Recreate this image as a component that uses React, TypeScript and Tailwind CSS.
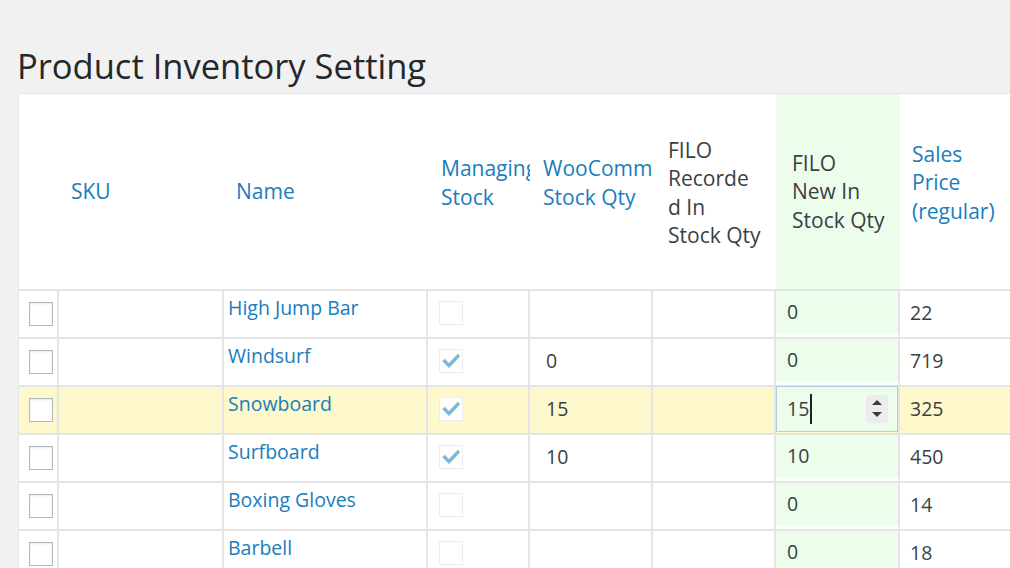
import clsx from 'clsx'

type Row = {
  name: string
  managed: boolean
  woo: string
  filoNew: string
  price: string
  active?: boolean
}

const rows: Row[] = [
  { name: 'High Jump Bar', managed: false, woo: '', filoNew: '0', price: '22' },
  { name: 'Windsurf', managed: true, woo: '0', filoNew: '0', price: '719' },
  { name: 'Snowboard', managed: true, woo: '15', filoNew: '15', price: '325', active: true },
  { name: 'Surfboard', managed: true, woo: '10', filoNew: '10', price: '450' },
  { name: 'Boxing Gloves', managed: false, woo: '', filoNew: '0', price: '14' },
  { name: 'Barbell', managed: false, woo: '', filoNew: '0', price: '18' },
]

const cell = 'border-r-2 border-b-2 border-[#e5e5e5]'
const head = 'flex items-center border-b-2 border-[#e5e5e5] text-[21px] leading-[28.3px]'
const link = 'text-[#1a7dbd]'

function Checkbox({ checked, disabled }: { checked?: boolean; disabled?: boolean }) {
  return (
    <span
      className={clsx(
        'relative block h-6 w-6 border-[1.5px] bg-white',
        disabled ? 'border-[#ececec]' : 'border-[#b4b9be] shadow-[inset_0_1px_2px_rgba(0,0,0,0.1)]',
      )}
    >
      {checked && (
        <svg viewBox="0 0 24 24" className="absolute left-[-1.5px] top-[-1.5px] h-6 w-6" aria-hidden>
          <polyline points="4.5,12 10,17.5 20,7" fill="none" stroke="#7ab8d8" strokeWidth="3.4" />
        </svg>
      )}
    </span>
  )
}

function Spinner() {
  return (
    <span className="ml-auto mr-[9px] block h-[28px] w-[22px] rounded-sm bg-[#ececec]">
      <svg viewBox="0 0 22 28" className="h-[28px] w-[22px]" aria-hidden>
        <path d="M6 10h10l-5-5z" fill="#3a3a3a" />
        <path d="M6 17h10l-5 5z" fill="#3a3a3a" />
      </svg>
    </span>
  )
}

export default function App() {
  return (
    <div className="h-[568px] w-[1010px] overflow-hidden bg-[#f1f1f1] pl-[18px] font-['Open_Sans',sans-serif] text-[#3a3f44]">
      <h1 className="-ml-px mb-[5px] pt-[43px] text-[34.5px] font-normal leading-[45px] text-[#23282d]">
        Product Inventory Setting
      </h1>

      <div className="grid w-max grid-cols-[40px_165px_204px_102px_123px_123px_124px_150px] border-l border-t border-[#e5e5e5] bg-white">
        {/* header */}
        <div className={clsx(head, 'h-[197px]')} />
        <div className={clsx(head, link, 'pl-[12px]')}>SKU</div>
        <div className={clsx(head, link, 'pl-[12px]')}>Name</div>
        <div className={clsx(head, link, 'overflow-hidden whitespace-nowrap pb-[18px] pl-[13px]')}>
          <span>
            Managing
            <br />
            Stock
          </span>
        </div>
        <div className={clsx(head, link, 'overflow-hidden whitespace-nowrap pb-[18px] pl-[13px]')}>
          <span>
            WooCommerce
            <br />
            Stock Qty
          </span>
        </div>
        <div className={clsx(head, 'pl-[15px] pt-[2px]')}>
          <span>
            FILO
            <br />
            Recorde
            <br />
            d In
            <br />
            Stock Qty
          </span>
        </div>
        <div className={clsx(head, 'bg-[#edfdec] pl-[16px]')}>
          <span>
            FILO
            <br />
            New In
            <br />
            Stock Qty
          </span>
        </div>
        <div className={clsx(head, link, 'pb-[18px] pl-[12px]')}>
          <span>
            Sales
            <br />
            Price
            <br />
            (regular)
          </span>
        </div>

        {/* rows */}
        {rows.map((row) => {
          const bg = row.active ? 'bg-[#fdf9cc]' : 'bg-white'
          return (
            <div key={row.name} className="contents text-[19.5px] leading-[28px]">
              <div className={clsx(cell, bg, 'flex h-12 items-center pl-[10px]')}>
                <Checkbox />
              </div>
              <div className={clsx(cell, bg)} />
              <div className={clsx(cell, bg, link, 'pl-[4px] pt-[3px]')}>{row.name}</div>
              <div className={clsx(cell, bg, 'flex items-center pb-[3px] pl-[11px]')}>
                <Checkbox checked={row.managed} disabled />
              </div>
              <div className={clsx(cell, bg, 'flex items-center pb-[3px] pl-[16px]')}>{row.woo}</div>
              <div className={clsx(cell, bg)} />
              <div className={clsx(cell, bg)}>
                {row.active ? (
                  <div className="-mt-px flex h-[46px] items-center border-[1.5px] border-[#b3cde0] bg-[#edfdec] pl-[10px]">
                    <span>{row.filoNew}</span>
                    <span className="ml-px block h-[30px] w-[1.5px] bg-[#222]" />
                    <Spinner />
                  </div>
                ) : (
                  <div className="flex h-[42px] items-center bg-[#edfdec] pl-[11px]">{row.filoNew}</div>
                )}
              </div>
              <div className={clsx(cell, bg, 'flex items-center pb-[3px] pl-[10px]')}>{row.price}</div>
            </div>
          )
        })}
      </div>
    </div>
  )
}
